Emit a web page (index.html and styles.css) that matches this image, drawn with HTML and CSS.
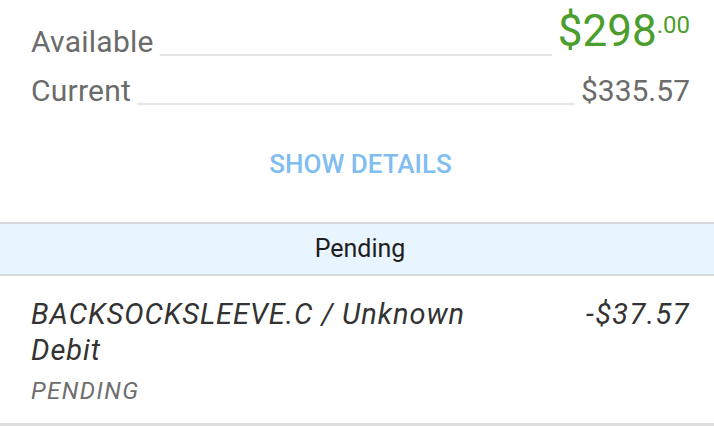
FILE: index.html
```html
<!DOCTYPE html>
<html>
<head>
<meta charset="utf-8">
<link rel="stylesheet" href="styles.css">
</head>
<body>
<div class="summary">
  <div class="row row-available">
    <span class="label">Available</span>
    <span class="filler"></span>
    <span class="big-value">$298<span class="cents">.00</span></span>
  </div>
  <div class="row row-current">
    <span class="label">Current</span>
    <span class="filler"></span>
    <span class="value">$335.57</span>
  </div>
  <div class="show-details">SHOW DETAILS</div>
</div>
<div class="section-header">Pending</div>
<div class="txn">
  <div class="txn-main">
    <div class="txn-name">BACKSOCKSLEEVE.C / Unknown Debit</div>
    <div class="txn-status">PENDING</div>
  </div>
  <div class="txn-amount">-$37.57</div>
</div>
</body>
</html>
```
FILE: styles.css
```css
html, body {
  margin: 0;
  padding: 0;
  background: #ffffff;
  font-family: Roboto, "Noto Sans", sans-serif;
}

.summary {
  padding: 9px 24px 0 31px;
}

.row {
  display: flex;
  align-items: flex-end;
}

.row-current {
  margin-top: 19px;
}

.label {
  font-size: 30px;
  line-height: 30px;
  letter-spacing: 0.25px;
  color: #6b6b6b;
}

.filler {
  flex: 1;
  border-bottom: 2px solid #e6e6e6;
  margin: 0 6px 1px;
}

.big-value {
  display: inline-flex;
  font-size: 44px;
  line-height: 44px;
  color: #4b9e2d;
  margin-bottom: 4px;
}

.cents {
  font-size: 24px;
  line-height: 33px;
  align-self: flex-start;
}

.value {
  font-size: 30px;
  line-height: 30px;
  color: #6b6b6b;
}

.show-details {
  margin-top: 43px;
  text-align: center;
  font-size: 26px;
  line-height: 30px;
  font-weight: 500;
  color: #80bdf0;
}

.section-header {
  margin-top: 43px;
  border-top: 2px solid #d6d8dc;
  border-bottom: 2px solid #d6d8dc;
  background: #e8f4fe;
  height: 50px;
  line-height: 50px;
  padding-left: 6px;
  text-align: center;
  font-size: 25px;
  color: #1e1e1e;
}

.txn {
  display: flex;
  align-items: flex-start;
  justify-content: space-between;
  padding: 20px 24px 17px 31px;
  border-bottom: 3px solid #dedede;
}

.txn-main {
  width: 470px;
}

.txn-name {
  font-size: 29px;
  line-height: 36px;
  letter-spacing: 0.95px;
  font-style: italic;
  color: #333333;
}

.txn-status {
  margin-top: 8px;
  font-size: 24px;
  line-height: 30px;
  letter-spacing: 1.4px;
  font-style: italic;
  color: #6e6e6e;
}

.txn-amount {
  font-size: 29px;
  line-height: 36px;
  letter-spacing: 1.4px;
  font-style: italic;
  color: #333333;
}
```
